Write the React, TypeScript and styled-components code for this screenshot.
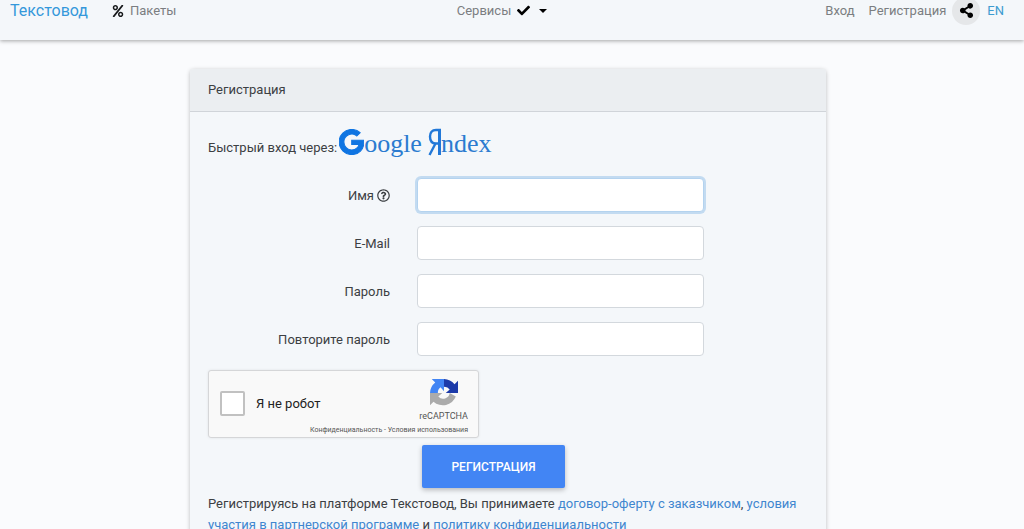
import React from 'react';
import styled, { createGlobalStyle } from 'styled-components';
import { FaCheck, FaGoogle, FaPercent, FaRegQuestionCircle, FaShareAlt } from 'react-icons/fa';

const GlobalStyle = createGlobalStyle`
  * { box-sizing: border-box; }
  body {
    margin: 0;
    background: #fafbfd;
    color: #3c4043;
    font: 400 13px/21px Roboto, sans-serif;
    overflow-x: hidden;
  }
  a { color: #3f86cf; text-decoration: none; }
`;

const Navbar = styled.nav`
  display: grid;
  grid-template-columns: 1fr auto 1fr;
  align-items: center;
  height: 55px;
  margin-top: -15px;
  padding: 0 20px 4px 10px;
  background: #f4f7fa;
  box-shadow: 0 1px 4px rgba(0, 0, 0, 0.35);
`;

const NavGroup = styled.div<{ $end?: boolean }>`
  display: flex;
  align-items: center;
  justify-content: ${p => (p.$end ? 'flex-end' : 'flex-start')};
`;

const Brand = styled.a`
  margin-right: 24px;
  color: #3498db;
  font-size: 16px;
`;

const NavLink = styled.a<{ $accent?: boolean }>`
  display: flex;
  align-items: center;
  gap: 6px;
  color: ${p => (p.$accent ? '#3d9bd0' : '#7b7e81')};
  svg { color: #17191b; }
`;

const MenuButton = styled.button`
  display: flex;
  align-items: center;
  gap: 6px;
  margin-right: 10px;
  padding: 0;
  border: 0;
  background: none;
  color: #7b7e81;
  font: inherit;
  svg { color: #000; }
`;

const Caret = styled.span`
  margin-left: 3px;
  border: 4px solid transparent;
  border-top-color: #000;
  border-bottom: 0;
`;

const Spread = styled.div`
  display: flex;
  gap: 14px;
  margin-right: 6px;
`;

const ShareButton = styled.button`
  display: grid;
  place-items: center;
  width: 28px;
  height: 28px;
  margin-right: 7px;
  padding: 0;
  border: 0;
  border-radius: 50%;
  background: #e5e7e9;
  color: #000;
`;

const Main = styled.main`
  padding: 29px 8px 24px 0;
`;

const Card = styled.section`
  width: 62.6%;
  margin: 0 auto;
  border-radius: 4px;
  background: #f4f7fa;
  box-shadow: 0 1px 4px rgba(0, 0, 0, 0.25);
`;

const CardHeader = styled.h1`
  margin: 0;
  padding: 10px 18px 11px;
  border-bottom: 1px solid #d0d4d9;
  border-radius: 4px 4px 0 0;
  background: #ebeef1;
  font-size: 13px;
  font-weight: 400;
`;

const CardBody = styled.form`
  padding: 16px 18px;
`;

const QuickLogin = styled.div`
  display: flex;
  align-items: baseline;
  gap: 2px;
  height: 33px;
  margin-bottom: 17px;
`;

const Providers = styled.span`
  display: flex;
  gap: 6px;
`;

const Provider = styled.a`
  display: flex;
  align-items: baseline;
  color: #2b7bd0;
  font: 26px/32px 'Liberation Serif', serif;
`;

const GoogleMark = styled(FaGoogle)`
  align-self: flex-start;
  width: 25px;
  height: 26px;
  margin-top: 1px;
  color: #0f75e2;
  stroke: currentColor;
  stroke-width: 20px;
`;

const YandexMark = styled.svg`
  align-self: flex-start;
  width: 13px;
  height: 28px;
  color: #2178d8;
`;

const Field = styled.div`
  display: grid;
  grid-template-columns: 182px minmax(0, 287px);
  column-gap: 27px;
  align-items: center;
  margin-bottom: 14px;
`;

const Label = styled.label`
  display: flex;
  align-items: center;
  justify-content: flex-end;
  gap: 3px;
`;

const Input = styled.input`
  width: 100%;
  height: 34px;
  padding: 4px 10px;
  border: 1px solid #d3d8dd;
  border-radius: 4px;
  background: #fff;
  font: inherit;
  &[name='name'] {
    border-color: #b4d3ef;
    box-shadow: 0 0 0 2px #c3dbf1;
    outline: 0;
  }
`;

const Captcha = styled.div`
  display: grid;
  grid-template-columns: 1fr auto;
  width: 271px;
  height: 68px;
  padding: 8px 10px 0 11px;
  border: 1px solid #d5d6d8;
  border-radius: 3px;
  background: #f9f9f9;
  box-shadow: 0 0 3px rgba(0, 0, 0, 0.08);
`;

const RobotCheck = styled.label`
  display: flex;
  align-items: center;
  gap: 11px;
  height: 48px;
  color: #222;
`;

const Checkbox = styled.input`
  appearance: none;
  width: 25px;
  height: 25px;
  margin: 0;
  border: 2px solid #c1c1c1;
  border-radius: 2px;
  background: #fff;
`;

const CaptchaBrand = styled.div`
  display: flex;
  flex-direction: column;
  align-items: center;
  gap: 2px;
  color: #555;
  font-size: 9px;
  line-height: 14px;
`;

const CaptchaLinks = styled.div`
  grid-column: 1 / -1;
  margin-top: -4px;
  color: #555;
  font-size: 7px;
  line-height: 8px;
  text-align: right;
  a { color: inherit; }
`;

const Submit = styled.button`
  display: block;
  width: 143px;
  height: 43px;
  margin: 7px 0 5px 214px;
  border: 0;
  border-radius: 2px;
  background: #4285f4;
  box-shadow: 0 2px 5px rgba(0, 0, 0, 0.25);
  color: #fff;
  font: 500 12px/18px Roboto, sans-serif;
  text-transform: uppercase;
`;

const Terms = styled.p`
  margin: 0;
`;

const RecaptchaLogo = () => (
  <svg width="28" height="28" viewBox="0 0 64 64" aria-hidden="true">
    <path fill="#1c3aa9" d="M64 32V4l-8 8A32 32 0 0 0 32 0v18a15 15 0 0 1 13 6l-9 8z" />
    <path fill="#4285f4" d="M32 0H4l8 8A32 32 0 0 0 0 32h18a15 15 0 0 1 6-13l8 9z" />
    <path fill="#ababab" d="M0 32v28l8-8a32 32 0 0 0 51-12L45 32a15 15 0 0 1-26 8l9-8z" />
  </svg>
);

const fields = [
  { name: 'name', label: 'Имя', type: 'text', help: true },
  { name: 'email', label: 'E-Mail', type: 'email' },
  { name: 'password', label: 'Пароль', type: 'password' },
  { name: 'confirm', label: 'Повторите пароль', type: 'password' },
];

export default function App() {
  return (
    <>
      <GlobalStyle />
      <Navbar>
        <NavGroup>
          <Brand href="#">Текстовод</Brand>
          <NavLink href="#"><FaPercent size={12} />Пакеты</NavLink>
        </NavGroup>
        <MenuButton type="button">Сервисы<FaCheck size={13} /><Caret /></MenuButton>
        <NavGroup $end>
          <Spread>
            <NavLink href="#">Вход</NavLink>
            <NavLink href="#">Регистрация</NavLink>
          </Spread>
          <ShareButton type="button" aria-label="Поделиться"><FaShareAlt size={15} /></ShareButton>
          <NavLink href="#" $accent>EN</NavLink>
        </NavGroup>
      </Navbar>
      <Main>
        <Card>
          <CardHeader>Регистрация</CardHeader>
          <CardBody onSubmit={e => e.preventDefault()}>
            <QuickLogin>
              <span>Быстрый вход через:</span>
              <Providers>
                <Provider href="#"><GoogleMark />oogle</Provider>
                <Provider href="#">
                  <YandexMark viewBox="0 0 13 28" fill="none" stroke="currentColor" aria-hidden="true">
                    <path strokeWidth="2.4" d="M13 2H8C4 2 2 4.500 2 8.500s2 7 6 7h3M7.500 15.500L1.500 27" />
                    <path strokeWidth="3" d="M11.500 1v26" />
                  </YandexMark>
                  ndex
                </Provider>
              </Providers>
            </QuickLogin>
            {fields.map(f => (
              <Field key={f.name}>
                <Label htmlFor={f.name}>{f.label}{f.help && <FaRegQuestionCircle size={13} />}</Label>
                <Input id={f.name} name={f.name} type={f.type} />
              </Field>
            ))}
            <Captcha>
              <RobotCheck><Checkbox type="checkbox" />Я не робот</RobotCheck>
              <CaptchaBrand><RecaptchaLogo /><span>reCAPTCHA</span></CaptchaBrand>
              <CaptchaLinks><a href="#">Конфиденциальность</a> - <a href="#">Условия использования</a></CaptchaLinks>
            </Captcha>
            <Submit type="submit">Регистрация</Submit>
            <Terms>
              Регистрируясь на платформе Текстовод, Вы принимаете <a href="#">договор-оферту с заказчиком</a>, <a href="#">условия участия в партнерской программе</a> и <a href="#">политику конфиденциальности</a>
            </Terms>
          </CardBody>
        </Card>
      </Main>
    </>
  );
}
